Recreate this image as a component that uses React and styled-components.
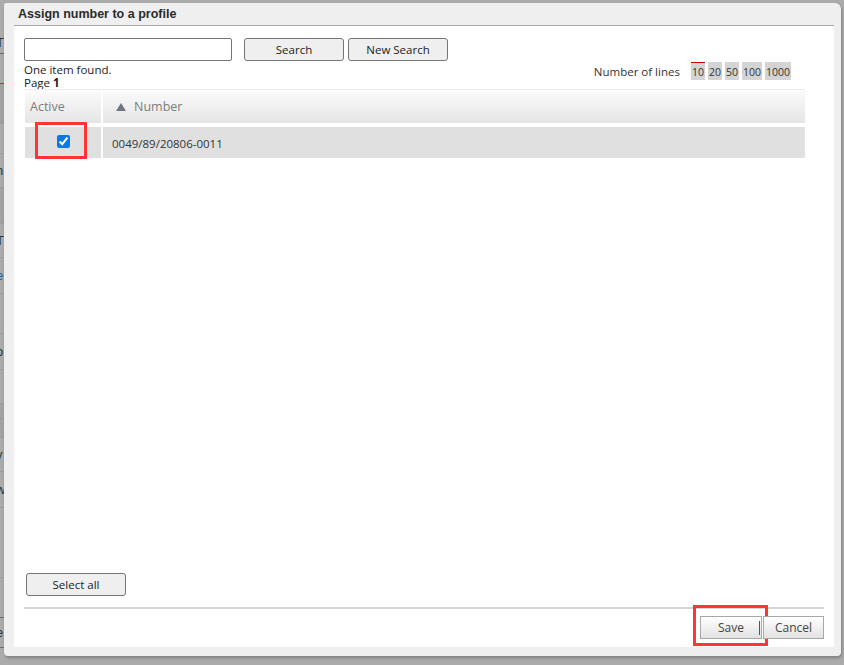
import React, { useState } from 'react';
import styled, { createGlobalStyle } from 'styled-components';

const GlobalStyle = createGlobalStyle`
  html, body {
    margin: 0;
    padding: 0;
    background: #ababab;
    overflow: hidden;
  }
  * { box-sizing: border-box; }
`;

const backRows = [
  { h: 22, t: 'T', line: true },
  { h: 30, t: '', red: true },
  { h: 40, t: '', dark: true },
  { h: 30, t: '' },
  { h: 34, t: 'n' },
  { h: 36, t: '', dark: true },
  { h: 34, t: 'T' },
  { h: 36, t: 'e', link: true },
  { h: 40, t: '' },
  { h: 36, t: 'o' },
  { h: 34, t: 't' },
  { h: 34, t: 'r', link: true, dark: true },
  { h: 34, t: 'y' },
  { h: 36, t: 'w' },
  { h: 70, t: '' },
  { h: 40, t: '', line: true },
  { h: 30, t: 'e', line: true },
];

const sizes = ['10', '20', '50', '100', '1000'];

const App = () => {
  const [active, setActive] = useState(true);
  const [lines, setLines] = useState('10');

  return (
    <>
      <GlobalStyle />
      <Screen>
        <BackPage>
          {backRows.map((r, i) => (
            <BackRow key={i} $h={r.h} $dark={r.dark} $line={r.line} $red={r.red} $link={r.link}>
              {r.t}
            </BackRow>
          ))}
        </BackPage>

        <Dialog>
          <TitleBar>Assign number to a profile</TitleBar>
          <Content>
            <SearchRow>
              <SearchInput type="text" />
              <GrayButton $w={100}>Search</GrayButton>
              <GrayButton $w={100}>New Search</GrayButton>
            </SearchRow>

            <InfoRow>
              <Info>
                <div>One item found.</div>
                <div>Page <b>1</b></div>
              </Info>
              <Lines>
                <span>Number of lines</span>
                <Sizes>
                  {sizes.map((s) => (
                    <SizeButton key={s} $active={lines === s} onClick={() => setLines(s)}>
                      {s}
                    </SizeButton>
                  ))}
                </Sizes>
              </Lines>
            </InfoRow>

            <Table>
              <thead>
                <tr>
                  <HeadCell $w={76}>Active</HeadCell>
                  <HeadCell $pad={13}>
                    <SortArrow viewBox="0 0 10 8">
                      <path d="M5 0 L10 8 L0 8 Z" fill="#6f7680" />
                    </SortArrow>
                    Number
                  </HeadCell>
                </tr>
              </thead>
              <tbody>
                <tr>
                  <CheckCell>
                    <Highlight $w={52} $h={37} />
                    <input type="checkbox" checked={active} onChange={() => setActive(!active)} />
                  </CheckCell>
                  <BodyCell>0049/89/20806-0011</BodyCell>
                </tr>
              </tbody>
            </Table>

            <Spacer />

            <GrayButton $w={100} $ml={2}>Select all</GrayButton>

            <Footer>
              <FooterButton $w={62} $sep>
                <Highlight $w={75} $h={41} />
                Save
              </FooterButton>
              <FooterButton $w={61}>Cancel</FooterButton>
            </Footer>
          </Content>
        </Dialog>
      </Screen>
    </>
  );
};

const Screen = styled.div`
  position: relative;
  width: 844px;
  height: 665px;
  background: #ababab;
  font-family: 'Open Sans', 'Noto Sans', sans-serif;
`;

const BackPage = styled.div`
  display: flex;
  flex-direction: column;
  width: 14px;
  overflow: hidden;
  padding-top: 32px;
`;

const BackRow = styled.div`
  height: ${({ $h }) => $h}px;
  background: ${({ $dark }) => ($dark ? '#a2a2a2' : '#ababab')};
  border-bottom: 1px solid ${({ $red, $line }) => ($red ? '#b33' : $line ? '#6a6a6a' : '#9d9d9d')};
  font-family: 'Liberation Sans', Arial, sans-serif;
  font-size: 13px;
  line-height: ${({ $h }) => $h}px;
  color: ${({ $link }) => ($link ? '#1a5fa8' : '#333')};
  text-indent: -4px;
`;

const Dialog = styled.div`
  position: absolute;
  left: 4px;
  top: 3px;
  width: 837px;
  height: 653px;
  background: #efefef;
  border-radius: 2px 6px 4px 4px;
  box-shadow: 1px 2px 3px rgba(0, 0, 0, 0.25);
  display: flex;
  flex-direction: column;
`;

const TitleBar = styled.div`
  height: 22px;
  padding-left: 14px;
  font-family: 'Liberation Sans', Arial, sans-serif;
  font-weight: bold;
  font-size: 12.5px;
  line-height: 22px;
  color: #2b2b2b;
`;

const Content = styled.div`
  flex: 1;
  margin: 0 7px 9px 10px;
  background: #fff;
  border-top: 1px solid #a9a9a9;
  display: flex;
  flex-direction: column;
  padding: 12px 10px 8px 10px;
  color: #222;
  font-size: 11.5px;
`;

const SearchRow = styled.div`
  display: flex;
  align-items: center;
  gap: 4px;
`;

const SearchInput = styled.input`
  width: 208px;
  height: 23px;
  margin-right: 8px;
  border: 1px solid #767676;
  border-radius: 2px;
  padding: 0 4px;
  font: inherit;
`;

const GrayButton = styled.button`
  width: ${({ $w }) => $w}px;
  height: 23px;
  margin-left: ${({ $ml }) => $ml || 0}px;
  background: #efefef;
  border: 1px solid #767676;
  border-radius: 3px;
  font-family: 'Open Sans', 'Noto Sans', sans-serif;
  font-size: 11.5px;
  color: #222;
  padding: 0;
  cursor: pointer;
`;

const InfoRow = styled.div`
  display: flex;
  justify-content: space-between;
  align-items: flex-start;
  margin-top: 2px;
  padding-right: 33px;
`;

const Info = styled.div`
  font-size: 11.5px;
  line-height: 13px;
  b { font-weight: bold; }
`;

const Lines = styled.div`
  display: flex;
  align-items: center;
  gap: 11px;
  color: #333;
  margin-top: -1px;
  font-size: 11.5px;
`;

const Sizes = styled.div`
  display: flex;
  gap: 3px;
`;

const SizeButton = styled.span`
  height: 18px;
  line-height: 19px;
  padding: 0 1px;
  background: #d4d4d4;
  border-top: 1px solid ${({ $active }) => ($active ? '#c40000' : '#d4d4d4')};
  color: #333;
  font-size: 10.5px;
  cursor: pointer;
`;

const Table = styled.table`
  width: 780px;
  margin: 0 0 0 1px;
  border-collapse: separate;
  border-spacing: 0;
`;

const HeadCell = styled.th`
  width: ${({ $w }) => ($w ? `${$w}px` : 'auto')};
  height: 38px;
  padding: 0 0 0 ${({ $pad }) => $pad || 5}px;
  text-align: left;
  font-weight: normal;
  font-size: 12.5px;
  color: #7d7d7d;
  background: linear-gradient(#fbfbfb, #e5e5e5);
  background-clip: padding-box;
  border-top: 1px solid #ececec;
  border-bottom: 4px solid #fff;
  & + & { border-left: 2px solid #fff; }
`;

const SortArrow = styled.svg`
  width: 10px;
  height: 8px;
  margin-right: 8px;
  vertical-align: 0px;
`;

const CheckCell = styled.td`
  position: relative;
  height: 31px;
  background: #e0e0e0;
  text-align: center;
  vertical-align: middle;
  padding: 0;
  input {
    width: 13px;
    height: 13px;
    margin: 0;
    accent-color: #0a78e6;
  }
`;

const BodyCell = styled.td`
  background: #e0e0e0;
  border-left: 2px solid #fff;
  padding: 1px 0 0 9px;
  font-size: 11.5px;
  color: #333;
`;

const Highlight = styled.span`
  position: absolute;
  left: 10px;
  top: -5px;
  width: ${({ $w }) => $w}px;
  height: ${({ $h }) => $h}px;
  border: 3px solid #ff3434;
  pointer-events: none;
`;

const Spacer = styled.div`
  flex: 1;
`;

const Footer = styled.div`
  margin-top: 11px;
  border-top: 2px solid #d3d3d3;
  padding-top: 7px;
  display: flex;
  justify-content: flex-end;
`;

const FooterButton = styled.button`
  position: relative;
  width: ${({ $w }) => $w}px;
  height: 23px;
  padding: 0;
  background: linear-gradient(#ffffff, #e2e2e2);
  border: 1px solid #a8a8a8;
  border-radius: 0;
  font-family: 'Open Sans', 'Noto Sans', sans-serif;
  font-size: 12px;
  color: #444;
  cursor: pointer;
  & + & { margin-left: 1px; }
  ${({ $sep }) => $sep && `
    &::after {
      content: '';
      position: absolute;
      right: 1px;
      top: 4px;
      height: 14px;
      border-right: 1px solid #555;
    }
  `}
  ${Highlight} {
    left: -8px;
    top: -12px;
  }
`;

export default App;
